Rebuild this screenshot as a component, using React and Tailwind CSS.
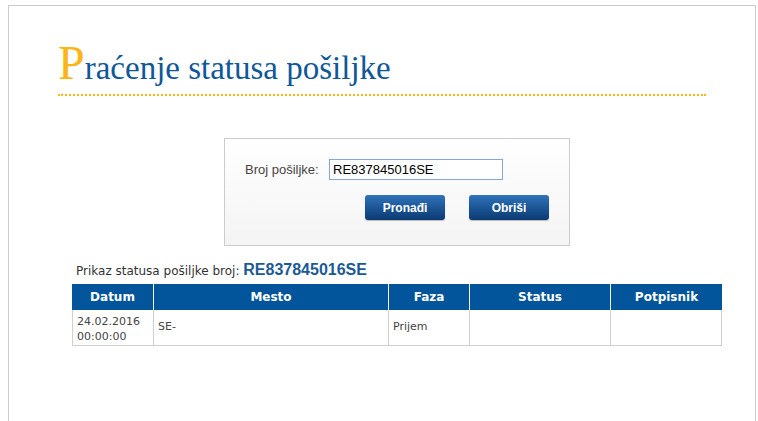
const kolone = [
  { naziv: "Datum", w: "w-[81px]" },
  { naziv: "Mesto", w: "w-[235px]" },
  { naziv: "Faza", w: "w-[81px]" },
  { naziv: "Status", w: "w-[141px]" },
  { naziv: "Potpisnik", w: "w-[112px]" },
];

export default function App() {
  return (
    <div className="h-screen overflow-hidden bg-white pt-[5px] font-['DejaVu_Sans',Verdana,sans-serif]">
      <div className="ml-[8px] h-[416px] w-[748px] border border-b-0 border-[#cccccc] bg-white">
        {/* naslov */}
        <div className="mx-[49px] mt-[33px] border-b-2 border-dotted border-[#fbb516] pb-[2px]">
          <h1 className="font-['Liberation_Serif',Georgia,serif] text-[33px] font-normal leading-[48px] text-[#0f5898]">
            <span className="text-[48px] text-[#fbb516]">P</span>raćenje statusa pošiljke
          </h1>
        </div>

        {/* pretraga */}
        <div className="ml-[215px] mt-[42px] h-[108px] w-[346px] border border-[#cccccc] bg-gradient-to-b from-white to-[#f4f4f4] px-[20px] pt-[20px] font-['Liberation_Sans',Arial,sans-serif]">
          <div className="flex items-center">
            <span className="w-[84px] text-[13px] text-[#4a4242]">Broj pošiljke:</span>
            <input
              readOnly
              value="RE837845016SE"
              className="h-[21px] w-[174px] border border-[#86a5dc] bg-white px-[3px] text-[13px] text-black outline-none"
            />
          </div>
          <div className="mt-[15px] flex justify-end gap-[24px]">
            {["Pronađi", "Obriši"].map((t) => (
              <button
                key={t}
                className="h-[25px] w-[80px] rounded-[3px] bg-gradient-to-b from-[#2f74bc] to-[#0b3a72] text-[12px] font-bold text-white shadow-[0_1px_1px_rgba(0,0,0,0.25)]"
              >
                {t}
              </button>
            ))}
          </div>
        </div>

        {/* rezultat */}
        <div className="ml-[67px] mt-[14px] h-[24px] leading-[20px]">
          <span className="text-[12px] text-[#333333]">Prikaz statusa pošiljke broj: </span>
          <span className="font-['Liberation_Sans',Arial,sans-serif] text-[16px] font-bold text-[#1c5a96]">
            RE837845016SE
          </span>
        </div>

        <div className="ml-[63px] w-[650px]">
          <div className="flex">
            {kolone.map((k, i) => (
              <div
                key={k.naziv}
                className={`${k.w} flex h-[26px] items-center justify-center bg-[#02559a] text-[12px] font-bold text-white ${
                  i > 0 ? "border-l border-white" : ""
                }`}
              >
                {k.naziv}
              </div>
            ))}
          </div>
          <div className="flex text-[11px] text-[#444444]">
            <div className="w-[81px] border-b border-l border-[#d0d0d0] pb-[1px] pl-[4px] pt-[4px] leading-[15px]">
              24.02.2016
              <br />
              00:00:00
            </div>
            <div className="flex w-[235px] items-center border-b border-l border-[#d0d0d0] pl-[4px]">SE-</div>
            <div className="flex w-[81px] items-center border-b border-l border-[#d0d0d0] pl-[4px]">Prijem</div>
            <div className="w-[141px] border-b border-l border-[#d0d0d0]" />
            <div className="w-[112px] border-b border-l border-r border-[#d0d0d0]" />
          </div>
        </div>
      </div>
    </div>
  );
}
